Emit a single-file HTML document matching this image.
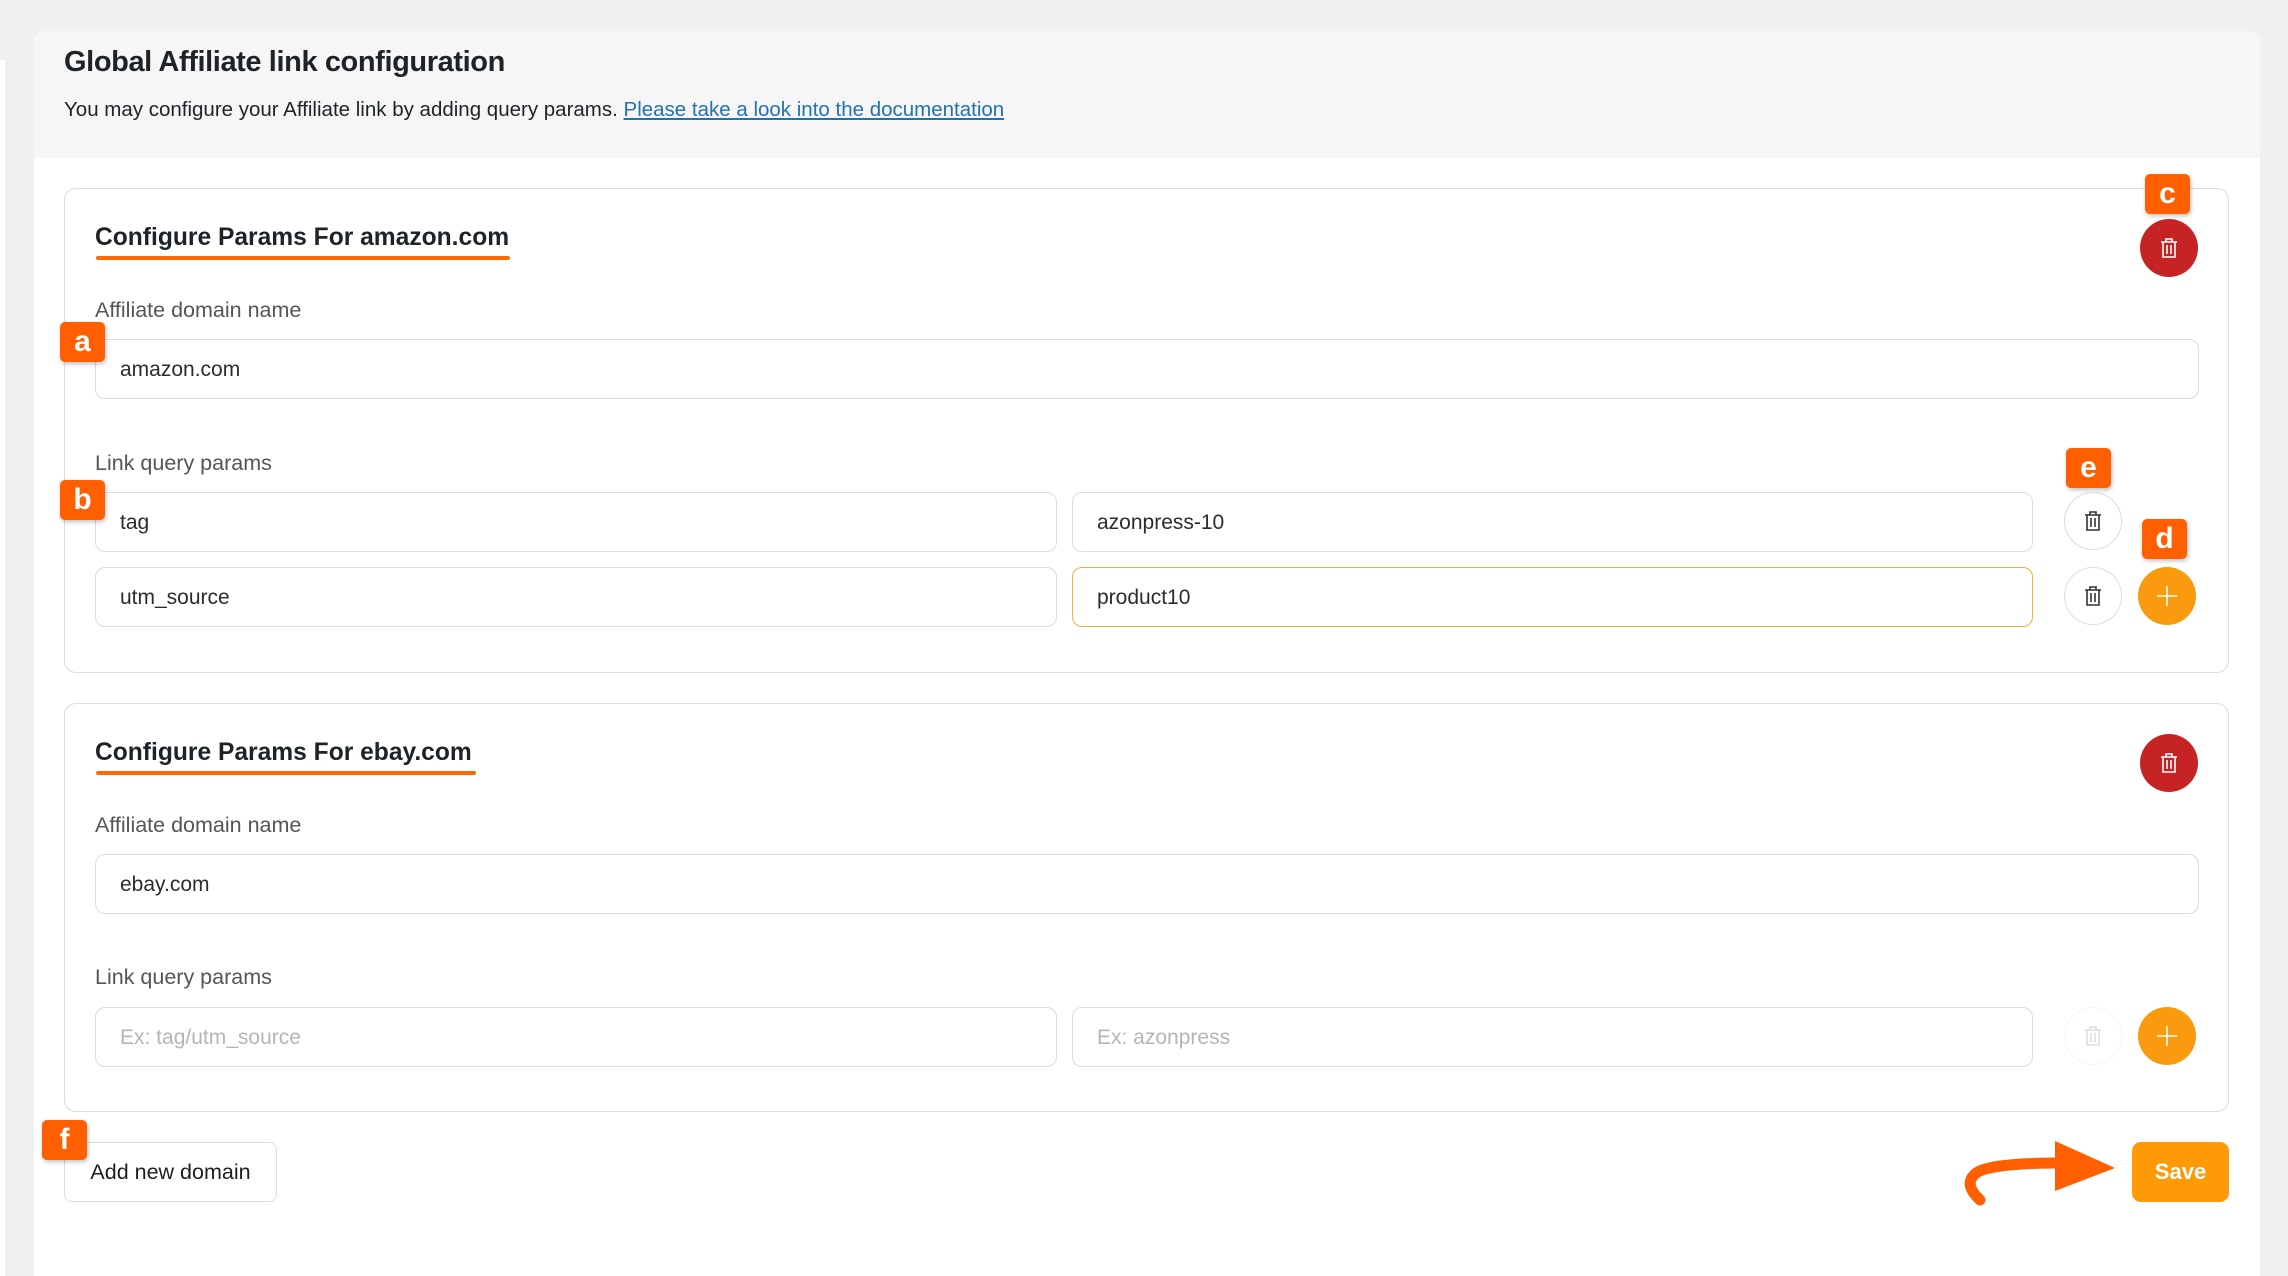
<!DOCTYPE html>
<html><head><meta charset="utf-8"><style>
*{box-sizing:border-box;margin:0;padding:0}
html{overflow:hidden;height:1276px}
body{width:2288px;height:1276px;background:#f0f0f1;font-family:"Liberation Sans",Arial,sans-serif;position:relative;overflow:hidden;color:#1e1e1e}
.abs{position:absolute}
.strip{left:0;width:5px;height:1216px;background:#fff;top:60px}
.panel{left:34px;top:31px;width:2226px;height:1245px;background:#fff;border-radius:10px 10px 0 0}
.head{left:34px;top:31px;width:2226px;height:127px;background:#f6f6f6;border-radius:10px 10px 0 0}
h1{position:absolute;left:64px;top:46px;font-size:29px;font-weight:bold;color:#1d2327;letter-spacing:-0.4px}
.sub{left:64px;top:98px;font-size:20.5px;color:#1d2327}
.sub a{color:#2271b1;text-decoration:underline}
.card{left:64px;width:2165px;border:1.5px solid #dcdcde;border-radius:12px;background:#fff}
.ct{font-size:24.6px;font-weight:bold;color:#1d2327;left:95px}
.ul{height:4px;background:#ff6a00;border-radius:2px;left:96px}
.lbl{font-size:21.5px;color:#555;left:95px}
.inp{border:1.5px solid #dcdcde;border-radius:10px;background:#fff;height:60px;font-size:21px;color:#2c2c2c;padding-left:24px;line-height:59px}
.ph{color:#b5b5b5}
.circ{width:58px;height:58px;border-radius:50%;display:flex;align-items:center;justify-content:center}
.red{background:#c62424}
.org{background:#fa9a0e}
.wht{border:1.5px solid #dcdcde;background:#fff}
.tag{background:#ff5f00;color:#fff;font-size:30px;font-weight:bold;border-radius:5px;width:45px;height:40px;text-align:center;line-height:40px;box-shadow:1px 2px 4px rgba(0,0,0,.25)}
.btn{border:1.5px solid #dcdcde;border-radius:8px;background:#fff;font-size:21.5px;color:#1e1e1e;text-align:center;line-height:59px}
</style></head><body>
<div class="abs strip"></div>
<div class="abs panel"></div>
<div class="abs head"></div>
<h1>Global Affiliate link configuration</h1>
<div class="abs sub">You may configure your Affiliate link by adding query params. <a>Please take a look into the documentation</a></div>

<div class="abs card" style="top:188px;height:485px"></div>
<div class="abs ct" style="top:224px">Configure Params For amazon.com</div>
<div class="abs ul" style="top:256px;width:414px"></div>
<div class="abs lbl" style="top:298px">Affiliate domain name</div>
<div class="abs inp" style="left:95px;top:339px;width:2104px">amazon.com</div>
<div class="abs lbl" style="top:451px">Link query params</div>
<div class="abs inp" style="left:95px;top:492px;width:962px">tag</div>
<div class="abs inp" style="left:1072px;top:492px;width:961px">azonpress-10</div>
<div class="abs inp" style="left:95px;top:567px;width:962px">utm_source</div>
<div class="abs inp" style="left:1072px;top:567px;width:961px;border-color:#f0b03a">product10</div>

<div class="abs circ red" style="left:2140px;top:219px"><svg width="20" height="22" viewBox="0 0 20 22" fill="none" stroke="#fff" stroke-width="1.6"><path d="M2 5h16M7 5V2h6v3M4 5v15h12V5M8 8v9M12 8v9"/></svg></div>
<div class="abs circ wht" style="left:2064px;top:492px"><svg width="20" height="22" viewBox="0 0 20 22" fill="none" stroke="#333" stroke-width="1.6"><path d="M2 5h16M7 5V2h6v3M4 5v15h12V5M8 8v9M12 8v9"/></svg></div>
<div class="abs circ wht" style="left:2064px;top:567px"><svg width="20" height="22" viewBox="0 0 20 22" fill="none" stroke="#333" stroke-width="1.6"><path d="M2 5h16M7 5V2h6v3M4 5v15h12V5M8 8v9M12 8v9"/></svg></div>
<div class="abs circ org" style="left:2138px;top:567px"><svg width="22" height="22" viewBox="0 0 22 22" stroke="#fff" stroke-width="1.6"><path d="M11 1v20M1 11h20"/></svg></div>

<div class="abs card" style="top:703px;height:409px"></div>
<div class="abs ct" style="top:739px">Configure Params For ebay.com</div>
<div class="abs ul" style="top:771px;width:380px"></div>
<div class="abs lbl" style="top:813px">Affiliate domain name</div>
<div class="abs inp" style="left:95px;top:854px;width:2104px">ebay.com</div>
<div class="abs lbl" style="top:965px">Link query params</div>
<div class="abs inp ph" style="left:95px;top:1007px;width:962px">Ex: tag/utm_source</div>
<div class="abs inp ph" style="left:1072px;top:1007px;width:961px">Ex: azonpress</div>
<div class="abs circ red" style="left:2140px;top:734px"><svg width="20" height="22" viewBox="0 0 20 22" fill="none" stroke="#fff" stroke-width="1.6"><path d="M2 5h16M7 5V2h6v3M4 5v15h12V5M8 8v9M12 8v9"/></svg></div>
<div class="abs circ" style="left:2064px;top:1007px;border:1px solid #f6f6f6"><svg width="20" height="22" viewBox="0 0 20 22" fill="none" stroke="#ddd" stroke-width="1.6"><path d="M2 5h16M7 5V2h6v3M4 5v15h12V5M8 8v9M12 8v9"/></svg></div>
<div class="abs circ org" style="left:2138px;top:1007px"><svg width="22" height="22" viewBox="0 0 22 22" stroke="#fff" stroke-width="1.6"><path d="M11 1v20M1 11h20"/></svg></div>

<div class="abs btn" style="left:64px;top:1142px;width:213px;height:60px">Add new domain</div>
<div class="abs" style="left:2132px;top:1142px;width:97px;height:60px;background:#fd9a05;border-radius:9px;color:#fff;font-weight:bold;font-size:22px;text-align:center;line-height:60px">Save</div>
<svg class="abs" style="left:1950px;top:1130px" width="180" height="85" viewBox="0 0 180 85"><path d="M30 70 Q14 55 24 45 Q34 33 110 33" fill="none" stroke="#ff5f00" stroke-width="11" stroke-linecap="round"/><path d="M105 11 L165 38 L105 61Z" fill="#ff5f00"/></svg>

<div class="abs tag" style="left:2145px;top:174px">c</div>
<div class="abs tag" style="left:60px;top:322px">a</div>
<div class="abs tag" style="left:60px;top:480px">b</div>
<div class="abs tag" style="left:2066px;top:448px">e</div>
<div class="abs tag" style="left:2142px;top:519px">d</div>
<div class="abs tag" style="left:42px;top:1120px">f</div>
</body></html>
